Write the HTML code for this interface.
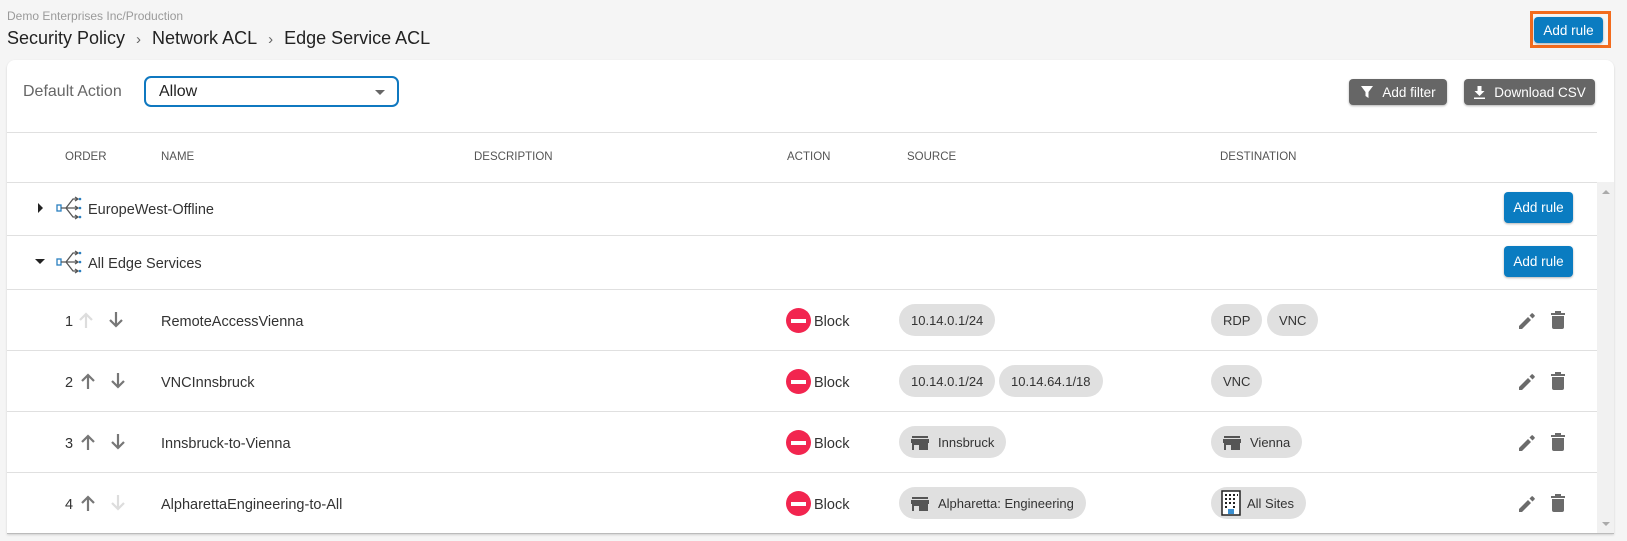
<!DOCTYPE html>
<html><head><meta charset="utf-8"><style>
*{box-sizing:border-box;margin:0;padding:0}
body{width:1627px;height:541px;background:#f5f5f5;font-family:"Liberation Sans",sans-serif;position:relative;overflow:hidden;color:#333}
.a{position:absolute}
.crumb{left:7px;top:9px;font-size:12px;color:#9a9a9a}
.title{left:7px;top:28px;font-size:18px;color:#222;white-space:nowrap}
.title span{font-size:15px;color:#666;margin:0 11px}
.orange{left:1530px;top:11px;width:81px;height:37px;border:3px solid #f26b1d}
.btn{background:#0a7cc1;color:#fff;font-size:13.5px;border-radius:4px;display:flex;align-items:center;justify-content:center;box-shadow:0 1px 2px rgba(0,0,0,.3)}
.gbtn{background:#666;color:#fff;font-size:13.5px;border-radius:4px;display:flex;align-items:center;justify-content:center;gap:8px;box-shadow:0 1px 2px rgba(0,0,0,.3)}
.card{left:7px;top:60px;width:1607px;height:474px;background:#fff;border-radius:8px 8px 0 0;box-shadow:0 1px 2px rgba(0,0,0,.15)}
.hl{height:1px;background:#e0e0e0;left:7px;width:1590px}
.th{font-size:11.5px;color:#555;top:151px}
.txt{font-size:14.5px;color:#333}
.chip{height:32px;border-radius:16px;background:#e0e0e0;font-size:13px;color:#333;display:flex;align-items:center;padding:0 12px;gap:9px;white-space:nowrap}
.blk{width:25px;height:25px;border-radius:50%;background:#f2254f}
.blk:after{content:"";position:absolute;left:5px;top:10.5px;width:15px;height:4px;background:#fff}
</style></head><body>
<div class="a crumb">Demo Enterprises Inc/Production</div>
<div class="a title">Security Policy<span>›</span>Network ACL<span>›</span>Edge Service ACL</div>
<div class="a orange"></div>
<div class="a btn" style="left:1534px;top:17px;width:69px;height:26px">Add rule</div>

<div class="a card"></div>
<div class="a" style="left:23px;top:83px;font-size:16px;color:#666">Default Action</div>
<div class="a" style="left:144px;top:76px;width:255px;height:31px;border:2px solid #0f78c0;border-radius:7px"></div>
<div class="a" style="left:159px;top:83px;font-size:16px;color:#222">Allow</div>
<div class="a" style="left:375px;top:90px;width:0;height:0;border-left:5px solid transparent;border-right:5px solid transparent;border-top:5px solid #666"></div>

<div class="a gbtn" style="left:1349px;top:79px;width:98px;height:26px"><svg width="14" height="14" viewBox="0 0 14 14"><path d="M1 1h12L8.5 7v6l-3-2V7z" fill="#fff"/></svg>Add filter</div>
<div class="a gbtn" style="left:1464px;top:79px;width:131px;height:26px"><svg width="13" height="14" viewBox="0 0 13 14"><path d="M4.5 1h4v5h3l-5 5-5-5h3z M1 12.5h11v1.5H1z" fill="#fff"/></svg>Download CSV</div>

<div class="a hl" style="top:132px"></div>
<div class="a th" style="left:65px">ORDER</div>
<div class="a th" style="left:161px">NAME</div>
<div class="a th" style="left:474px">DESCRIPTION</div>
<div class="a th" style="left:787px">ACTION</div>
<div class="a th" style="left:907px">SOURCE</div>
<div class="a th" style="left:1220px">DESTINATION</div>
<div class="a hl" style="top:182px"></div>
<div class="a hl" style="top:235px"></div>
<div class="a hl" style="top:289px"></div>
<div class="a hl" style="top:350px"></div>
<div class="a hl" style="top:411px"></div>
<div class="a hl" style="top:472px"></div>
<div class="a" style="left:1597px;top:182px;width:17px;height:351px;background:#f1f1f1"></div>
<div class="a" style="left:1602px;top:190px;border-left:4px solid transparent;border-right:4px solid transparent;border-bottom:4px solid #aaa"></div>
<div class="a" style="left:1602px;top:522px;border-left:4px solid transparent;border-right:4px solid transparent;border-top:4px solid #aaa"></div>
<div class="a" style="left:7px;top:533px;width:1607px;height:1px;background:#bbb"></div>

<div class="a" style="left:38px;top:203px;border-top:5px solid transparent;border-bottom:5px solid transparent;border-left:5px solid #222"></div>
<div class="a" style="left:35px;top:259px;border-left:5px solid transparent;border-right:5px solid transparent;border-top:5px solid #222"></div>
<svg class="a" style="left:56px;top:196px" width="26" height="24" viewBox="0 0 26 24"><rect x="1" y="9" width="4" height="6" fill="none" stroke="#2a7fc0" stroke-width="1.3"/><path d="M5 12h5M10 12L17 3h5M10 12h12M10 12l7 9h5M19 1l3 2-3 2M19 10l3 2-3 2M19 19l3 2-3 2" fill="none" stroke="#555" stroke-width="1.3"/><circle cx="24" cy="3" r="1.3" fill="#2a7fc0"/><circle cx="24" cy="12" r="1.3" fill="#2a7fc0"/><circle cx="24" cy="21" r="1.3" fill="#2a7fc0"/></svg>
<svg class="a" style="left:56px;top:250px" width="26" height="24" viewBox="0 0 26 24"><rect x="1" y="9" width="4" height="6" fill="none" stroke="#2a7fc0" stroke-width="1.3"/><path d="M5 12h5M10 12L17 3h5M10 12h12M10 12l7 9h5M19 1l3 2-3 2M19 10l3 2-3 2M19 19l3 2-3 2" fill="none" stroke="#555" stroke-width="1.3"/><circle cx="24" cy="3" r="1.3" fill="#2a7fc0"/><circle cx="24" cy="12" r="1.3" fill="#2a7fc0"/><circle cx="24" cy="21" r="1.3" fill="#2a7fc0"/></svg>
<div class="a txt" style="left:88px;top:202px">EuropeWest-Offline</div>
<div class="a txt" style="left:88px;top:256px">All Edge Services</div>
<div class="a btn" style="left:1504px;top:192px;width:69px;height:31px">Add rule</div>
<div class="a btn" style="left:1504px;top:246px;width:69px;height:31px">Add rule</div>

<div class="a txt" style="left:65px;top:314px">1</div>
<div class="a txt" style="left:65px;top:375px">2</div>
<div class="a txt" style="left:65px;top:436px">3</div>
<div class="a txt" style="left:65px;top:497px">4</div>

<svg width="0" height="0" style="position:absolute"><defs>
<path id="up" d="M8 17V3M2 9l6-6 6 6" fill="none" stroke-width="2.2"/>
<path id="dn" d="M8 1v14M2 9l6 6 6-6" fill="none" stroke-width="2.2"/>
</defs></svg>
<svg class="a" style="left:78px;top:311px" width="16" height="18"><use href="#up" stroke="#ddd"/></svg>
<svg class="a" style="left:108px;top:311px" width="16" height="18"><use href="#dn" stroke="#777"/></svg>
<svg class="a" style="left:80px;top:372px" width="16" height="18"><use href="#up" stroke="#777"/></svg>
<svg class="a" style="left:110px;top:372px" width="16" height="18"><use href="#dn" stroke="#777"/></svg>
<svg class="a" style="left:80px;top:433px" width="16" height="18"><use href="#up" stroke="#777"/></svg>
<svg class="a" style="left:110px;top:433px" width="16" height="18"><use href="#dn" stroke="#777"/></svg>
<svg class="a" style="left:80px;top:494px" width="16" height="18"><use href="#up" stroke="#777"/></svg>
<svg class="a" style="left:110px;top:494px" width="16" height="18"><use href="#dn" stroke="#ddd"/></svg>

<div class="a txt" style="left:161px;top:314px">RemoteAccessVienna</div>
<div class="a txt" style="left:161px;top:375px">VNCInnsbruck</div>
<div class="a txt" style="left:161px;top:436px">Innsbruck-to-Vienna</div>
<div class="a txt" style="left:161px;top:497px">AlpharettaEngineering-to-All</div>

<div class="a blk" style="left:786px;top:308px"></div><div class="a txt" style="left:814px;top:314px">Block</div>
<div class="a blk" style="left:786px;top:369px"></div><div class="a txt" style="left:814px;top:375px">Block</div>
<div class="a blk" style="left:786px;top:430px"></div><div class="a txt" style="left:814px;top:436px">Block</div>
<div class="a blk" style="left:786px;top:491px"></div><div class="a txt" style="left:814px;top:497px">Block</div>

<svg width="0" height="0" style="position:absolute"><defs>
<g id="store"><path d="M1 1h16v2H1z M0 4h18v4H0z M1 8h16v7H1z" fill="#555"/><rect x="3" y="10" width="5" height="5" fill="#e0e0e0"/></g>
</defs></svg>

<div class="a chip" style="left:899px;top:304px">10.14.0.1/24</div>
<div class="a chip" style="left:899px;top:365px">10.14.0.1/24</div>
<div class="a chip" style="left:999px;top:365px">10.14.64.1/18</div>
<div class="a chip" style="left:899px;top:426px"><svg width="18" height="15"><use href="#store"/></svg>Innsbruck</div>
<div class="a chip" style="left:899px;top:487px"><svg width="18" height="15"><use href="#store"/></svg>Alpharetta: Engineering</div>

<div class="a chip" style="left:1211px;top:304px">RDP</div>
<div class="a chip" style="left:1267px;top:304px">VNC</div>
<div class="a chip" style="left:1211px;top:365px">VNC</div>
<div class="a chip" style="left:1211px;top:426px"><svg width="18" height="15"><use href="#store"/></svg>Vienna</div>
<div class="a chip" style="left:1211px;top:487px;padding-left:8px;gap:4px"><svg width="24" height="26" viewBox="0 0 24 26"><rect x="3" y="1" width="18" height="24" fill="#fff" stroke="#222" stroke-width="1.5"/><path d="M6 4h2v2H6zM10 4h2v2h-2zM14 4h2v2h-2zM18 4h1v2h-1zM6 8h2v2H6zM10 8h2v2h-2zM14 8h2v2h-2zM6 12h2v2H6zM10 12h2v2h-2zM14 12h2v2h-2zM6 16h2v2H6zM14 16h2v2h-2z" fill="#222"/><rect x="9" y="19" width="6" height="5" fill="#3a8fd0"/></svg>All Sites</div>

<svg width="0" height="0" style="position:absolute"><defs>
<g id="ed"><path d="M0 15v3h3l9-9-3-3z M13.5 7.5l2-2a1 1 0 000-1.4l-1.6-1.6a1 1 0 00-1.4 0l-2 2z" fill="#6b6b6b"/></g>
<g id="tr"><path d="M0 2h14v2H0z M4 0h6v2H4z M1 5h12v11a2 2 0 01-2 2H3a2 2 0 01-2-2z" fill="#6b6b6b"/></g>
</defs></svg>
<svg class="a" style="left:1519px;top:311px" width="18" height="18"><use href="#ed"/></svg>
<svg class="a" style="left:1551px;top:311px" width="14" height="18"><use href="#tr"/></svg>
<svg class="a" style="left:1519px;top:372px" width="18" height="18"><use href="#ed"/></svg>
<svg class="a" style="left:1551px;top:372px" width="14" height="18"><use href="#tr"/></svg>
<svg class="a" style="left:1519px;top:433px" width="18" height="18"><use href="#ed"/></svg>
<svg class="a" style="left:1551px;top:433px" width="14" height="18"><use href="#tr"/></svg>
<svg class="a" style="left:1519px;top:494px" width="18" height="18"><use href="#ed"/></svg>
<svg class="a" style="left:1551px;top:494px" width="14" height="18"><use href="#tr"/></svg>
</body></html>
